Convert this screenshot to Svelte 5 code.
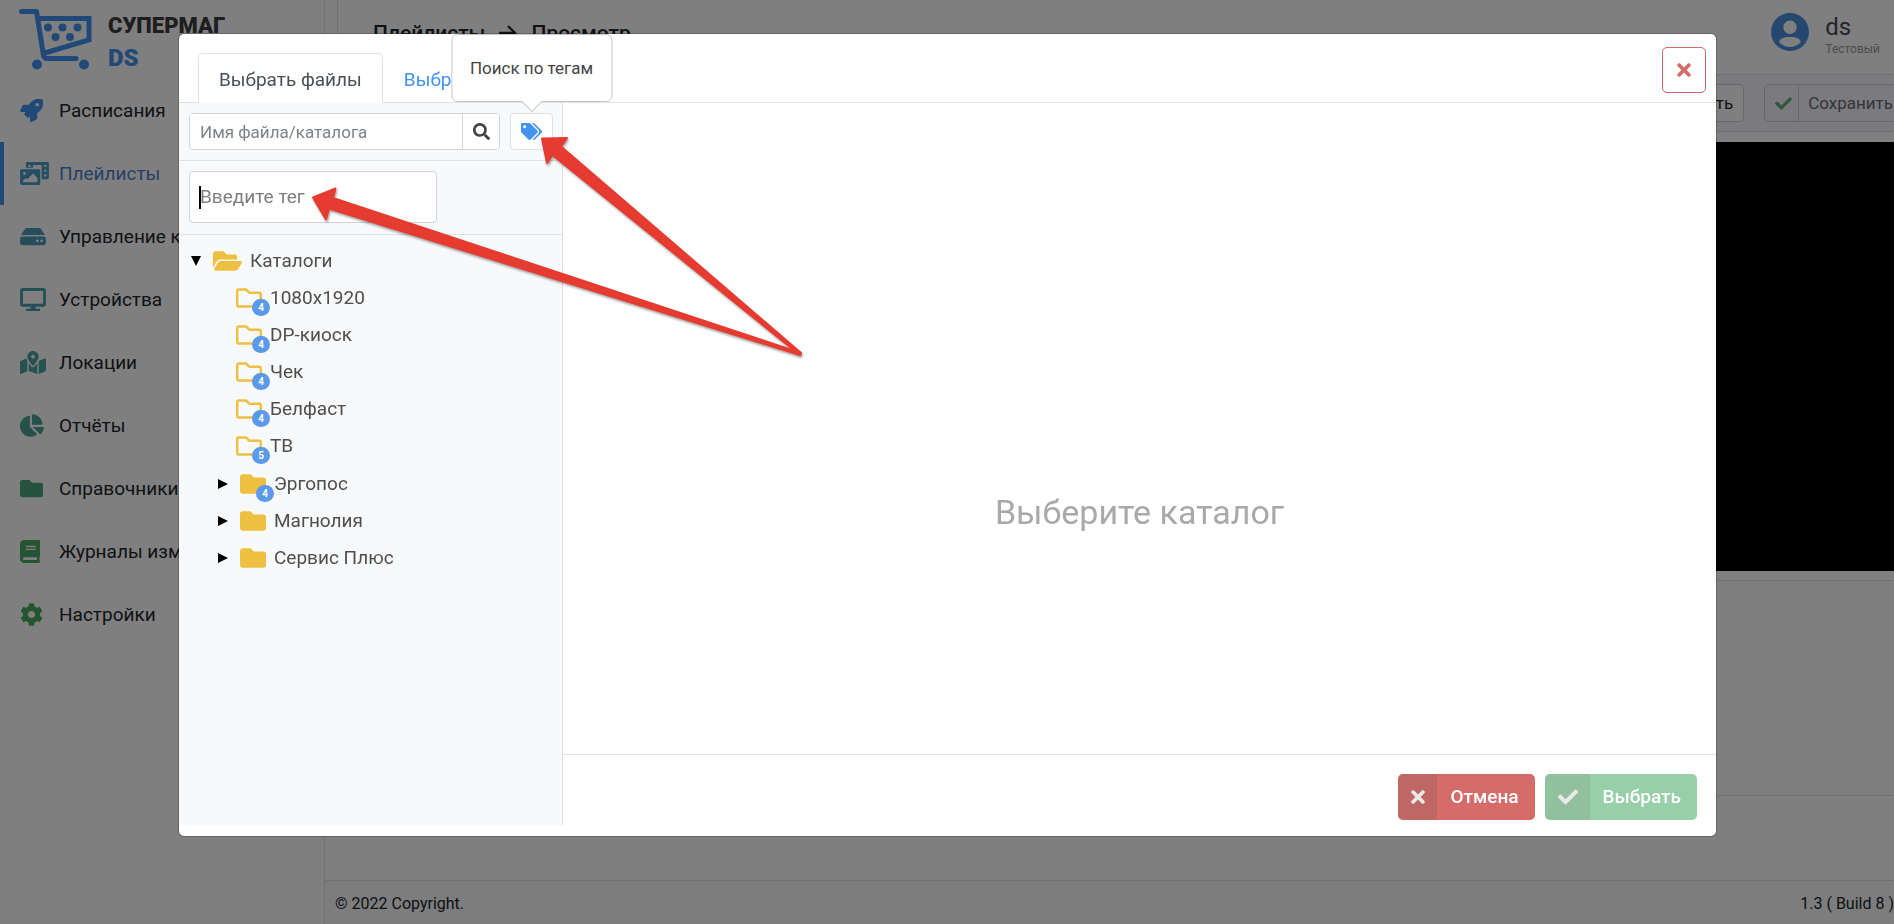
<script>
  const shapes = {
    rocket: [512, 'M505.12019,19.09375c-1.18945-5.53125-6.65819-11-12.207-12.1875C460.716,0,435.507,0,410.40747,0,307.17523,0,245.26909,55.20312,199.05238,128H94.83772c-16.34763.01562-35.55658,11.875-42.88664,26.48438L2.51562,253.29688A28.4,28.4,0,0,0,0,264a24.00867,24.00867,0,0,0,24.00582,24H127.81618l-22.47457,22.46875c-11.36521,11.36133-12.99607,32.25781,0,45.25L156.24582,406.625c11.15623,11.1875,32.15619,13.15625,45.27726,0l22.47457-22.46875V488a24.00867,24.00867,0,0,0,24.00581,24,28.55934,28.55934,0,0,0,10.707-2.51562l98.72834-49.39063c14.62888-7.29687,26.50776-26.5,26.50776-42.85937V312.79688c72.59753-46.3125,128.03493-108.40626,128.03493-211.09376C512.07526,76.5,512.07526,51.29688,505.12019,19.09375ZM384.04033,168A40,40,0,1,1,424.05,128,40.02322,40.02322,0,0,1,384.04033,168Z'],
    media: [640, 'M608 0H160a32 32 0 0 0-32 32v96h160V64h192v320h128a32 32 0 0 0 32-32V32a32 32 0 0 0-32-32zM232 103a9 9 0 0 1-9 9h-30a9 9 0 0 1-9-9V73a9 9 0 0 1 9-9h30a9 9 0 0 1 9 9zm352 208a9 9 0 0 1-9 9h-30a9 9 0 0 1-9-9v-30a9 9 0 0 1 9-9h30a9 9 0 0 1 9 9zm0-104a9 9 0 0 1-9 9h-30a9 9 0 0 1-9-9v-30a9 9 0 0 1 9-9h30a9 9 0 0 1 9 9zm0-104a9 9 0 0 1-9 9h-30a9 9 0 0 1-9-9V73a9 9 0 0 1 9-9h30a9 9 0 0 1 9 9zm-168 57H32a32 32 0 0 0-32 32v288a32 32 0 0 0 32 32h384a32 32 0 0 0 32-32V192a32 32 0 0 0-32-32zM96 224a32 32 0 1 1-32 32 32 32 0 0 1 32-32zm288 224H64v-32l64-64 32 32 128-128 96 96z'],
    drive: [576, 'M576 304v96c0 26.51-21.49 48-48 48H48c-26.51 0-48-21.49-48-48v-96c0-26.51 21.49-48 48-48h480c26.51 0 48 21.49 48 48zm-48-80a79.557 79.557 0 0 1 30.777 6.165L462.25 85.374A48.003 48.003 0 0 0 422.311 64H153.689a48 48 0 0 0-39.938 21.374L17.223 230.165A79.557 79.557 0 0 1 48 224h480zm-48 96c-17.673 0-32 14.327-32 32s14.327 32 32 32 32-14.327 32-32-14.327-32-32-32zm-96 0c-17.673 0-32 14.327-32 32s14.327 32 32 32 32-14.327 32-32-14.327-32-32-32z'],
    desktop: [576, 'M528 0H48C21.5 0 0 21.5 0 48v320c0 26.5 21.5 48 48 48h192l-16 48h-72c-13.3 0-24 10.7-24 24s10.7 24 24 24h272c13.3 0 24-10.7 24-24s-10.7-24-24-24h-72l-16-48h192c26.5 0 48-21.5 48-48V48c0-26.5-21.5-48-48-48zm-16 352H64V64h448v288z'],
    map: [576, 'M288 0c-69.59 0-126 56.41-126 126 0 56.26 82.35 158.8 113.9 196.02 6.39 7.54 17.82 7.54 24.2 0C331.65 284.8 414 182.26 414 126 414 56.41 357.59 0 288 0zm0 168c-23.2 0-42-18.8-42-42s18.8-42 42-42 42 18.8 42 42-18.8 42-42 42zM20.12 215.95A32.006 32.006 0 0 0 0 245.66v250.32c0 11.32 11.43 19.06 21.94 14.86L160 448V214.92c-8.84-15.98-16.07-31.54-21.25-46.42L20.12 215.95zM288 359.67c-14.07 0-27.38-6.18-36.51-16.96-19.66-23.2-40.57-49.62-59.49-76.72v182l192 64V266c-18.92 27.09-39.82 53.52-59.49 76.72-9.13 10.77-22.44 16.95-36.51 16.95zm266.06-198.51L416 224v288l139.88-55.95A31.996 31.996 0 0 0 576 426.34V176.02c0-11.32-11.43-19.06-21.94-14.86z'],
    pie: [544, 'M527.79 288H290.5l158.03 158.03c6.04 6.04 15.98 6.53 22.19.68 38.7-36.46 65.32-85.61 73.13-140.86 1.34-9.46-6.51-17.85-16.06-17.85zm-15.83-64.8C503.72 103.74 408.26 8.28 288.8.04 279.68-.59 272 7.1 272 16.24V240h223.77c9.14 0 16.82-7.68 16.19-16.8zM224 288V50.71c0-9.55-8.39-17.4-17.84-16.06C86.99 51.49-4.1 155.6.14 280.37 4.5 408.51 114.83 513.59 243.03 511.98c50.4-.63 96.97-16.87 135.26-44.03 7.9-5.6 8.42-17.23 1.57-24.08L224 288z'],
    folder: [512, 'M464 128H272l-64-64H48C21.49 64 0 85.49 0 112v288c0 26.51 21.49 48 48 48h416c26.51 0 48-21.49 48-48V176c0-26.51-21.49-48-48-48z'],
    folderLine: [512, 'M464 128H272l-54.63-54.63c-6-6-14.14-9.37-22.63-9.37H48C21.49 64 0 85.49 0 112v288c0 26.51 21.49 48 48 48h416c26.51 0 48-21.49 48-48V176c0-26.51-21.49-48-48-48zm0 272H48V112h140.12l54.63 54.63c6 6 14.14 9.37 22.63 9.37H464v224z'],
    folderOpen: [576, 'M572.694 292.093L500.27 416.248A63.997 63.997 0 0 1 444.989 448H45.025c-18.523 0-30.064-20.093-20.731-36.093l72.424-124.155A64 64 0 0 1 152 256h399.964c18.523 0 30.064 20.093 20.73 36.093zM152 224h328v-48c0-26.51-21.49-48-48-48H272l-64-64H48C21.49 64 0 85.49 0 112v278.046l69.077-118.418C86.214 242.25 117.989 224 152 224z'],
    book: [448, 'M448 360V24c0-13.3-10.7-24-24-24H96C43 0 0 43 0 96v320c0 53 43 96 96 96h328c13.3 0 24-10.7 24-24v-16c0-7.5-3.5-14.3-8.9-18.7-4.2-15.4-4.2-59.3 0-74.7 5.4-4.3 8.9-11.1 8.9-18.6zM128 134c0-3.3 2.7-6 6-6h212c3.3 0 6 2.7 6 6v20c0 3.3-2.7 6-6 6H134c-3.3 0-6-2.7-6-6v-20zm0 64c0-3.3 2.7-6 6-6h212c3.3 0 6 2.7 6 6v20c0 3.3-2.7 6-6 6H134c-3.3 0-6-2.7-6-6v-20zm253.4 250H96c-17.7 0-32-14.3-32-32 0-17.6 14.4-32 32-32h285.4c-1.9 17.1-1.9 46.9 0 64z'],
    cog: [512, 'M487.4 315.7l-42.6-24.6c4.3-23.2 4.3-47 0-70.2l42.6-24.6c4.9-2.8 7.1-8.6 5.5-14-11.1-35.6-30-67.8-54.7-94.6-3.8-4.1-10-5.1-14.8-2.3L380.8 110c-17.9-15.4-38.5-27.3-60.8-35.1V25.8c0-5.6-3.9-10.5-9.4-11.7-36.7-8.2-74.3-7.8-109.2 0-5.5 1.2-9.4 6.1-9.4 11.7V75c-22.2 7.9-42.8 19.8-60.8 35.1L88.7 85.5c-4.9-2.8-11-1.9-14.8 2.3-24.7 26.7-43.6 58.9-54.7 94.6-1.7 5.4.6 11.2 5.5 14L67.3 221c-4.3 23.2-4.3 47 0 70.2l-42.6 24.6c-4.9 2.8-7.1 8.6-5.5 14 11.1 35.6 30 67.8 54.7 94.6 3.8 4.1 10 5.1 14.8 2.3l42.6-24.6c17.9 15.4 38.5 27.3 60.8 35.1v49.2c0 5.6 3.9 10.5 9.4 11.7 36.7 8.2 74.3 7.8 109.2 0 5.5-1.2 9.4-6.1 9.4-11.7v-49.2c22.2-7.9 42.8-19.8 60.8-35.1l42.6 24.6c4.9 2.8 11 1.9 14.8-2.3 24.7-26.7 43.6-58.9 54.7-94.6 1.5-5.5-.7-11.3-5.6-14.1zM256 336c-44.1 0-80-35.9-80-80s35.9-80 80-80 80 35.9 80 80-35.9 80-80 80z'],
    search: [512, 'M505 442.7L405.3 343c-4.5-4.5-10.6-7-17-7H372c27.6-35.3 44-79.7 44-128C416 93.1 322.9 0 208 0S0 93.1 0 208s93.1 208 208 208c48.3 0 92.7-16.4 128-44v16.3c0 6.4 2.5 12.5 7 17l99.7 99.7c9.4 9.4 24.6 9.4 33.9 0l28.3-28.3c9.4-9.4 9.4-24.6.1-34zM208 336c-70.7 0-128-57.2-128-128 0-70.7 57.2-128 128-128 70.7 0 128 57.2 128 128 0 70.7-57.2 128-128 128z'],
    tags: [640, 'M497.941 225.941L286.059 14.059A48 48 0 0 0 252.118 0H48C21.49 0 0 21.49 0 48v204.118a48 48 0 0 0 14.059 33.941l211.882 211.882c18.744 18.745 49.136 18.746 67.882 0l204.118-204.118c18.745-18.745 18.745-49.137 0-67.882zM112 160c-26.51 0-48-21.49-48-48s21.49-48 48-48 48 21.49 48 48-21.49 48-48 48zm513.941 133.823L421.823 497.941c-18.745 18.745-49.137 18.745-67.882 0l-.36-.36L527.64 323.522c16.999-16.999 26.36-39.6 26.36-63.64s-9.362-46.641-26.36-63.64L331.397 0h48.721a48 48 0 0 1 33.941 14.059l211.882 211.882c18.745 18.745 18.745 49.137 0 67.882z'],
    times: [352, 'M242.72 256l100.07-100.07c12.28-12.28 12.28-32.19 0-44.48l-22.24-22.24c-12.28-12.28-32.19-12.28-44.48 0L176 189.28 75.93 89.21c-12.28-12.28-32.19-12.28-44.48 0L9.21 111.45c-12.28 12.28-12.28 32.19 0 44.48L109.28 256 9.21 356.07c-12.28 12.28-12.28 32.19 0 44.48l22.24 22.24c12.28 12.28 32.2 12.28 44.48 0L176 322.72l100.07 100.07c12.28 12.28 32.2 12.28 44.48 0l22.24-22.24c12.28-12.28 12.28-32.19 0-44.48L242.72 256z'],
    check: [512, 'M173.898 439.404l-166.4-166.4c-9.997-9.997-9.997-26.206 0-36.204l36.203-36.204c9.997-9.998 26.207-9.998 36.204 0L192 312.69 432.095 72.596c9.997-9.997 26.207-9.997 36.204 0l36.203 36.204c9.997 9.997 9.997 26.206 0 36.204l-294.4 294.401c-9.998 9.997-26.207 9.997-36.204-.001z'],
  };

  const menu = [
    { label: 'Расписания', icon: 'rocket', color: '#4292ef' },
    { label: 'Плейлисты', icon: 'media', color: '#4a9ac6', active: true },
    { label: 'Управление контентом', icon: 'drive', color: '#4a9bb8' },
    { label: 'Устройства', icon: 'desktop', color: '#4a9fae' },
    { label: 'Локации', icon: 'map', color: '#4aa39f' },
    { label: 'Отчёты', icon: 'pie', color: '#4aa390' },
    { label: 'Справочники', icon: 'folder', color: '#4aa67e' },
    { label: 'Журналы изменений', icon: 'book', color: '#4aa865' },
    { label: 'Настройки', icon: 'cog', color: '#4aaa5c' },
  ];

  const leaves = [
    { name: '1080x1920', count: 4 },
    { name: 'DP-киоск', count: 4 },
    { name: 'Чек', count: 4 },
    { name: 'Белфаст', count: 4 },
    { name: 'ТВ', count: 5 },
  ];

  const branches = [
    { name: 'Эргопос', count: 4 },
    { name: 'Магнолия' },
    { name: 'Сервис Плюс' },
  ];
</script>

{#snippet icon(name, size)}
  <svg height={size} width={Math.round((size * shapes[name][0]) / 512)} viewBox="0 0 {shapes[name][0]} 512" fill="currentColor" aria-hidden="true">
    <path d={shapes[name][1]} />
  </svg>
{/snippet}

<div class="page">
  <aside class="side">
    <a class="brand" href="#home">
      <svg width="74" height="62" viewBox="0 0 74 62" aria-hidden="true">
        <path d="M2.500 3.500H17.500L24.500 47.500Q25 50.500 28.500 50.500H57" fill="none" stroke="currentColor" stroke-width="5" stroke-linecap="round" stroke-linejoin="round" />
        <path d="M20 10.500H70V32L24 45.500" fill="none" stroke="currentColor" stroke-width="5" />
        <g fill="currentColor">
          <circle cx="29" cy="19.500" r="4" /><circle cx="43.500" cy="19.500" r="4" /><circle cx="58.500" cy="19.500" r="4" />
          <circle cx="36.500" cy="29" r="4" /><circle cx="51" cy="29" r="4" />
          <circle cx="18" cy="56.500" r="5" /><circle cx="65" cy="56.500" r="5" />
        </g>
      </svg>
      <span class="wordmark"><span>СУПЕРМАГ</span><span class="ds">DS</span></span>
    </a>
    <nav>
      {#each menu as item}
        <a class="item" class:active={item.active} href="#section">
          <span class="glyph" style="color: {item.color}">{@render icon(item.icon, 23)}</span>
          {item.label}
        </a>
      {/each}
    </nav>
  </aside>

  <div class="main">
    <header class="top">
      <h1>
        <span>Плейлисты</span>
        <svg width="18" height="16" viewBox="0 0 18 16" aria-hidden="true"><path d="M0 8H16M9 1L16 8L9 15" fill="none" stroke="currentColor" stroke-width="2.400" /></svg>
        <span>Просмотр</span>
      </h1>
      <div class="user">
        <svg width="38" height="38" viewBox="0 0 38 38" aria-hidden="true">
          <path fill="currentColor" fill-rule="evenodd" d="M19 0a19 19 0 1 0 0 38a19 19 0 1 0 0-38zM19 7.500a6.700 6.700 0 1 1 0 13.400a6.700 6.700 0 1 1 0-13.400zM8 29C10 24 15 24 19 24S28 24 30 29C27 32.500 23 34 19 34S11 32.500 8 29z" />
        </svg>
        <div><div class="name">ds</div><div class="role">Тестовый</div></div>
      </div>
    </header>
    <div class="tools">
      <button class="tool" type="button">Изменить</button>
      <button class="tool split" type="button"><span class="mark">{@render icon('check', 17)}</span><span class="txt">Сохранить</span></button>
    </div>
    <div class="screen"></div>
    <div class="panel"></div>
    <footer class="foot"><span>© 2022 Copyright.</span><span>1.3 ( Build 8 )</span></footer>
  </div>
</div>

<div class="backdrop">
  <div class="modal" role="dialog" aria-modal="true" aria-label="Выбрать файлы">
    <div class="tabs">
      <button class="tab current" type="button">Выбрать файлы</button>
      <button class="tab" type="button">Выбр</button>
      <button class="close" type="button" aria-label="Закрыть">{@render icon('times', 20)}</button>
    </div>
    <div class="content">
      <div class="browser">
        <div class="row search">
          <div class="group">
            <input type="text" aria-label="Имя файла/каталога" placeholder="Имя файла/каталога" />
            <button type="button" aria-label="Найти">{@render icon('search', 17)}</button>
          </div>
          <div class="tagwrap">
            <button class="tagbtn" type="button" aria-label="Поиск по тегам">{@render icon('tags', 17)}</button>
            <div class="tip" role="tooltip">Поиск по тегам</div>
          </div>
        </div>
        <div class="row tag">
          <label class="tagfield"><i class="caret"></i><input type="text" aria-label="Тег" placeholder="Введите тег" /></label>
        </div>
        <div class="tree">
          <div class="node root"><i class="open"></i><span class="fold">{@render icon('folderOpen', 26)}</span>Каталоги</div>
          {#each leaves as leaf}
            <div class="node leaf"><span class="fold">{@render icon('folderLine', 26)}<b>{leaf.count}</b></span>{leaf.name}</div>
          {/each}
          <div class="branches">
            {#each branches as branch}
              <div class="node branch"><i class="closed"></i><span class="fold">{@render icon('folder', 26)}{#if branch.count}<b>{branch.count}</b>{/if}</span>{branch.name}</div>
            {/each}
          </div>
        </div>
      </div>
      <div class="view">
        <div class="empty">Выберите каталог</div>
        <div class="actions">
          <button class="act cancel" type="button"><span class="mark">{@render icon('times', 20)}</span><span class="txt">Отмена</span></button>
          <button class="act ok" type="button"><span class="mark">{@render icon('check', 20)}</span><span class="txt">Выбрать</span></button>
        </div>
      </div>
    </div>
  </div>
</div>

<svg class="arrows" width="810" height="370" viewBox="0 0 810 370" aria-hidden="true">
  <g fill="#e63b30" stroke="#e63b30" stroke-width="2" stroke-linejoin="round">
    <path d="M313 197.500L335.500 188.500L333 198L801 353L800 355L329 208.500L326 219.500z" />
    <path d="M542 138.500L567 138L561 146.500L801 353L800 355L552.500 155L547 163z" />
  </g>
</svg>

<style>
  :global(body) { margin: 0; overflow: hidden; }
  * { box-sizing: border-box; }
  .page, .backdrop { font-family: Roboto, "Noto Sans", sans-serif; font-size: 19px; color: #212529; }
  button, input { font: inherit; margin: 0; }
  svg { display: block; flex: none; }
  a { text-decoration: none; color: inherit; }

  .page { display: flex; height: 100vh; overflow: hidden; background: #fff; }
  .side { flex: none; width: 325px; border-right: 1px solid #dee2e6; }
  .brand { display: flex; gap: 15px; height: 79px; padding: 8px 0 0 19px; color: #4292ef; }
  .wordmark { display: flex; flex-direction: column; padding-top: 2px; font-size: 22px; line-height: 32px; font-weight: 900; color: #3c3c3c; }
  .ds { font-size: 24px; color: #4292ef; }
  .item { display: flex; align-items: center; height: 63px; padding-left: 16px; border-left: 4px solid transparent; white-space: nowrap; }
  .item.active { border-color: #4292ef; color: #4b7fd0; }
  .glyph { flex: none; width: 39px; }

  .main { flex: 1; min-width: 0; display: flex; flex-direction: column; }
  .top { display: flex; justify-content: space-between; height: 75px; margin-left: 12px; padding: 13px 17px 0 35px; border-left: 1px solid #dee2e6; border-bottom: 1px solid #dee2e6; }
  h1 { display: flex; align-items: center; gap: 14px; height: 28px; margin: 6px 0 0; font-size: 21px; font-weight: 500; }
  .user { display: flex; gap: 16px; margin-right: -3px; color: #4b8ee0; }
  .name { font-size: 24px; line-height: 28px; color: #454a50; }
  .role { font-size: 12px; line-height: 16px; color: #999; }
  .tools { display: flex; justify-content: flex-end; gap: 20px; height: 57px; padding-top: 9px; background: #f6f5fc; border-bottom: 1px solid #dee2e6; }
  .tool { height: 38px; padding: 0 10px; font-size: 17px; color: #212529; background: #fff; border: 1px solid #ccd2d8; border-radius: 5px; }
  .split { display: flex; flex: none; align-items: center; padding: 0; margin-right: -10px; background: transparent; color: #666a70; }
  .split .mark { display: flex; align-items: center; height: 100%; padding: 0 6px 0 10px; border-right: 1px solid #ccd2d8; color: #5fae7c; }
  .split .txt { padding: 0 10px 0 9px; }
  .screen { flex: none; height: 429px; margin-top: 10px; background: #000; }
  .panel { flex: none; height: 216px; margin-top: 9px; background: #fafcfb; border: 1px solid #dee2e6; border-width: 1px 0; }
  .foot { display: flex; justify-content: space-between; align-items: center; height: 44px; margin-top: auto; padding: 2px 0 0 10px; font-size: 16px; background: #f8faf9; border-top: 1px solid #dee2e6; }

  .backdrop { position: fixed; inset: 0; padding: 33px 177px 0 178px; background: rgba(0, 0, 0, .5); }
  .modal { display: flex; flex-direction: column; height: calc(100vh - 120px); padding-bottom: 11px; background: #fff; background-clip: padding-box; border: 1px solid rgba(0, 0, 0, .2); border-radius: 6px; color: #495057; }
  .tabs { flex: none; display: flex; align-items: flex-end; height: 69px; padding: 0 10px 0 19px; border-bottom: 1px solid #dee2e6; }
  .tab { height: 50px; padding: 2px 20px 0; margin-bottom: -1px; background: none; border: 1px solid transparent; border-radius: 5px 5px 0 0; color: #4292ef; }
  .current { color: #495057; background: #fff; border-color: #dee2e6 #dee2e6 #fff; }
  .close { display: flex; align-items: center; justify-content: center; width: 44px; height: 46px; margin: 0 0 9px auto; padding: 0; color: #d56c69; background: #fff; border: 1px solid #d56c69; border-radius: 5px; }
  .content { flex: 1; min-height: 0; display: flex; }
  .browser { flex: none; width: 384px; background: #f8f9fb; border-right: 1px solid #dee2e6; }
  .row { display: flex; padding: 10px 9px 10px 10px; gap: 10px; border-bottom: 1px solid #dee2e6; }
  .search { height: 58px; }
  .group { flex: 1; display: flex; min-width: 0; border: 1px solid #ced4da; border-radius: 4px; background: #fff; overflow: hidden; }
  .group input { flex: 1; min-width: 0; padding: 0 10px; font-size: 17px; border: 0; outline: 0; }
  .group input::placeholder { color: #7b838b; opacity: 1; }
  .group button { display: flex; align-items: center; justify-content: center; width: 37px; padding: 0; background: #fff; border: 0; border-left: 1px solid #ced4da; color: #444; }
  .tagwrap { position: relative; display: flex; }
  .tagbtn { display: flex; align-items: center; justify-content: center; width: 43px; padding: 0; background: #fff; border: 1px solid #dee2e6; border-radius: 4px; color: #4292ef; }
  .tip { position: absolute; left: 50%; bottom: 48px; transform: translateX(-50%); padding: 20px 18px 19px; font-size: 17px; line-height: 27px; white-space: nowrap; color: #444; background: #fff; border: 1px solid #c4c6c8; border-radius: 6px; }
  .tip::after { content: ""; position: absolute; left: 50%; bottom: -8px; width: 14px; height: 14px; margin-left: -7px; background: #fff; border: 1px solid #c4c6c8; border-width: 0 1px 1px 0; transform: rotate(45deg); }
  .tag { height: 74px; }
  .tagfield { display: flex; align-items: center; width: 248px; height: 52px; padding-left: 9px; background: #fff; border: 1px solid #ced4da; border-radius: 4px; }
  .tagfield input { width: 100%; padding: 0 0 2px; font-size: 19px; border: 0; outline: 0; background: transparent; }
  .tagfield input::placeholder { color: #7f7f7f; opacity: 1; }
  .caret { flex: none; width: 2px; height: 23px; margin-right: -1px; background: #000; }
  .tree { padding-top: 7px; }
  .node { display: flex; align-items: center; height: 37px; color: #4f4f4f; }
  .fold { position: relative; display: flex; color: #efbf41; }
  .fold b { position: absolute; right: -8px; bottom: -5px; width: 18px; height: 17px; border-radius: 9px; background: #5b99ea; color: #fff; font-size: 10px; line-height: 17px; text-align: center; }
  .root { padding-left: 12px; }
  .root .fold { margin: 0 8px 0 12px; }
  .leaf { padding-left: 57px; }
  .leaf .fold, .branch .fold { margin-right: 8px; }
  .branches { padding-top: 1px; }
  .branch { padding-left: 39px; }
  .open { border: 5px solid transparent; border-top: 10px solid #000; border-bottom: 0; }
  .closed { margin-right: 12px; border: 5px solid transparent; border-left: 10px solid #000; border-right: 0; }
  .view { flex: 1; display: flex; flex-direction: column; margin-bottom: -11px; }
  .empty { flex: 1; padding-top: 385px; font-size: 34px; line-height: 48px; text-align: center; color: #a9a9a9; }
  .actions { display: flex; justify-content: flex-end; gap: 10px; height: 82px; padding: 19px; border-top: 1px solid #dee2e6; }
  .act { display: flex; height: 46px; padding: 0; border: 0; border-radius: 5px; overflow: hidden; color: #fff; font-weight: 500; }
  .act .mark { display: flex; align-items: center; height: 100%; padding: 0 12px 0 13px; color: #e9e9e9; background: rgba(128, 88, 88, .25); }
  .act .txt { padding: 0 16px 0 13px; line-height: 46px; }
  .cancel { background: #d56c69; }
  .ok { background: #97cfa9; }
  .ok .mark { background: rgba(128, 148, 128, .25); }
  .arrows { position: fixed; left: 0; top: 0; pointer-events: none; filter: drop-shadow(1px 2px 1px rgba(0, 0, 0, .35)); }
</style>
